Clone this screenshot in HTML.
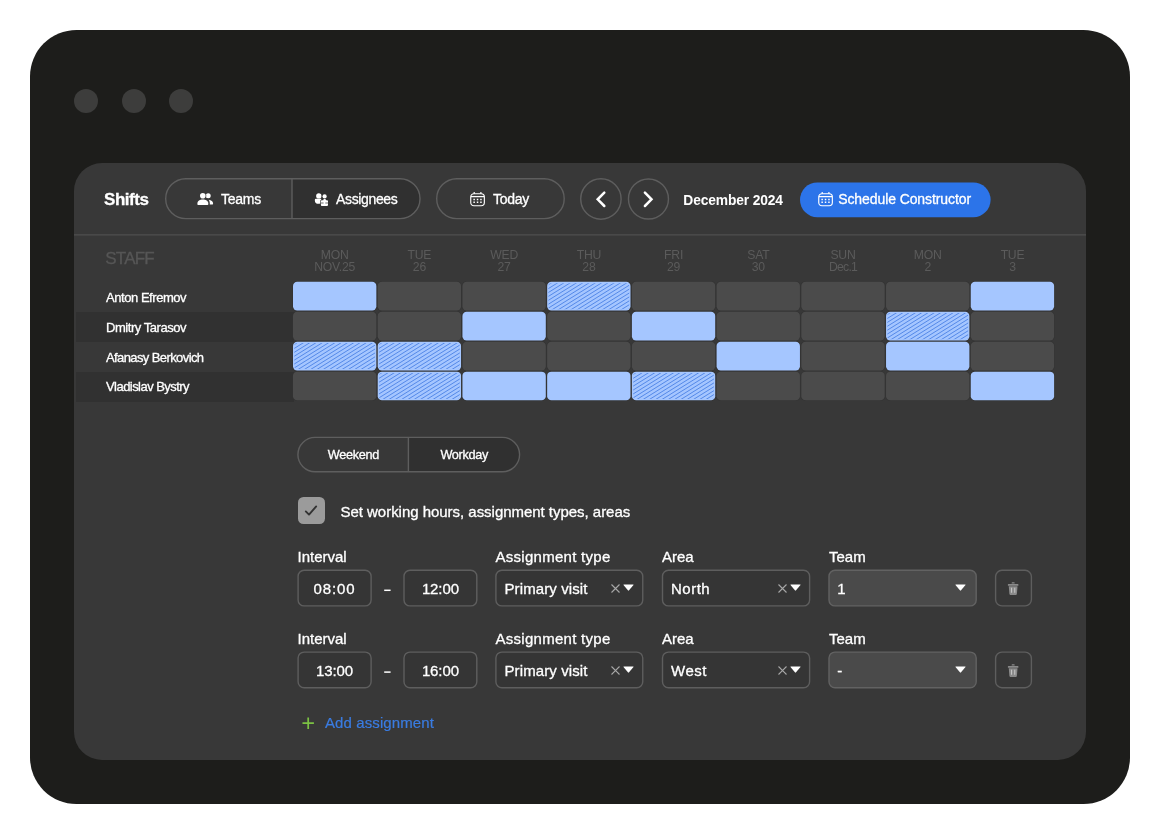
<!DOCTYPE html>
<html lang="en">
<head>
<meta charset="utf-8">
<title>Shifts</title>
<style>
*{box-sizing:border-box;margin:0;padding:0}
html,body{width:1160px;height:834px;background:#fff;overflow:hidden}
body{font-family:"Liberation Sans",Arial,sans-serif;color:#fff;position:relative}
.abs{position:absolute}
.frame{position:absolute;left:30px;top:30px;width:1100px;height:774px;background:#1d1d1b;border-radius:46.5px}
.dot{position:absolute;top:89px;width:24px;height:24px;border-radius:50%;background:#3d3d3c}
.panel{position:absolute;left:74px;top:163px;width:1012px;height:597px;background:#383838;border-radius:28px;overflow:hidden;will-change:transform}
.t{position:absolute;white-space:nowrap;line-height:1;-webkit-text-stroke:0.3px currentColor}
.pill{position:absolute;box-shadow:inset 0 0 0 1.6px #5c5c5c;border-radius:21px}
.hline{position:absolute;left:0;top:71px;width:1012px;height:1.4px;background:#4e4e4e}
.zebra{position:absolute;left:2px;width:218px;height:30px;background:#313131}
.cell{position:absolute;width:83.6px;height:28.6px;border-radius:4.5px;background:#4d4d4d;box-shadow:0 0 0 0.8px #303030}
.cell.b{background:#a4c5ff}
.cell.h{background:#a5c6ff;overflow:hidden}
.dh{position:absolute;top:85.7px;width:84px;text-align:center;font-size:12.2px;line-height:12.3px;color:#5b5b5b;letter-spacing:-0.22px}
.name{font-size:13px;letter-spacing:-0.45px;left:32px}
.lbl{font-size:15px;color:#fff}
.inp{position:absolute;height:36.8px;box-shadow:inset 0 0 0 1.6px #5c5c5c;border-radius:6.5px;background:#353535}
.inp.team{background:#4a4a4a;box-shadow:inset 0 0 0 1.6px #606060}
.val{font-size:15px}
</style>
</head>
<body>
<div class="frame"></div>
<div class="dot" style="left:74px"></div>
<div class="dot" style="left:122px"></div>
<div class="dot" style="left:169px"></div>

<div class="panel" id="panel">
  <svg class="abs" style="left:0;top:0" width="1012" height="597" viewBox="0 0 1012 597"><path d="M218.00 15.70H326.05A19.95 19.95 0 0 1 326.05 55.60H218.00z" fill="#303030"/><path d="M218.00 15.70V55.60" stroke="#5e5e5e" stroke-width="1.4"/><rect x="91.70" y="15.70" width="254.30" height="39.90" rx="19.95" fill="none" stroke="#5e5e5e" stroke-width="1.4"/><rect x="362.70" y="15.70" width="127.50" height="39.90" rx="19.95" fill="none" stroke="#5e5e5e" stroke-width="1.4"/><path d="M334.40 274.40H428.40A17.20 17.20 0 0 1 428.40 308.80H334.40z" fill="#303030"/><path d="M334.40 274.40V308.80" stroke="#5e5e5e" stroke-width="1.4"/><rect x="223.90" y="274.40" width="221.70" height="34.40" rx="17.20" fill="none" stroke="#5e5e5e" stroke-width="1.4"/><circle cx="526.90" cy="36.00" r="20.2" fill="none" stroke="#5e5e5e" stroke-width="1.4"/><circle cx="574.45" cy="36.00" r="20.0" fill="none" stroke="#5e5e5e" stroke-width="1.4"/><rect x="726.0" y="19.5" width="190.6" height="34.7" rx="17.35" fill="#2c74e9"/><path d="M0 71.9H1012" stroke="#4f4f4f" stroke-width="1.3"/><path d="M530.30 29.60L523.70 36.30L530.30 43.00" fill="none" stroke="#fff" stroke-width="2.5" stroke-linecap="round" stroke-linejoin="miter"/><path d="M570.90 29.60L577.50 36.30L570.90 43.00" fill="none" stroke="#fff" stroke-width="2.5" stroke-linecap="round" stroke-linejoin="miter"/><rect x="224.10" y="407.30" width="73.00" height="35.60" rx="6" fill="#353535" stroke="#5e5e5e" stroke-width="1.4"/><rect x="330.00" y="407.30" width="72.80" height="35.60" rx="6" fill="#353535" stroke="#5e5e5e" stroke-width="1.4"/><rect x="421.90" y="407.30" width="146.85" height="35.60" rx="6" fill="#353535" stroke="#5e5e5e" stroke-width="1.4"/><rect x="588.50" y="407.30" width="147.10" height="35.60" rx="6" fill="#353535" stroke="#5e5e5e" stroke-width="1.4"/><rect x="755.00" y="407.30" width="147.20" height="35.60" rx="6" fill="#4a4a4a" stroke="#626262" stroke-width="1.4"/><rect x="921.60" y="407.30" width="35.80" height="35.60" rx="6.3" fill="#373737" stroke="#5e5e5e" stroke-width="1.4"/><path d="M310.20 427.30h6.4" stroke="#fff" stroke-width="1.5"/><rect x="224.10" y="489.10" width="73.00" height="35.60" rx="6" fill="#353535" stroke="#5e5e5e" stroke-width="1.4"/><rect x="330.00" y="489.10" width="72.80" height="35.60" rx="6" fill="#353535" stroke="#5e5e5e" stroke-width="1.4"/><rect x="421.90" y="489.10" width="146.85" height="35.60" rx="6" fill="#353535" stroke="#5e5e5e" stroke-width="1.4"/><rect x="588.50" y="489.10" width="147.10" height="35.60" rx="6" fill="#353535" stroke="#5e5e5e" stroke-width="1.4"/><rect x="755.00" y="489.10" width="147.20" height="35.60" rx="6" fill="#4a4a4a" stroke="#626262" stroke-width="1.4"/><rect x="921.60" y="489.10" width="35.80" height="35.60" rx="6.3" fill="#373737" stroke="#5e5e5e" stroke-width="1.4"/><path d="M310.20 509.10h6.4" stroke="#fff" stroke-width="1.5"/></svg>
  <!-- toolbar -->
  <div class="t" style="left:30px;top:28px;font-size:17px;font-weight:bold;letter-spacing:-0.45px">Shifts</div>

  <svg class="abs" style="left:122px;top:28px" width="18" height="15" viewBox="196 191 18 15"><g fill="#fff"><circle cx="208.200" cy="195.800" r="2.500"/><circle cx="202.800" cy="195.800" r="3.500" fill="#383838"/><circle cx="202.800" cy="195.800" r="2.800"/><path d="M197.400 204.300V203.500C197.400 200.800 200 199.500 202.850 199.500C205.700 199.500 208.300 200.800 208.300 203.500V204.300Q208.300 205 207.600 205H198.100Q197.400 205 197.400 204.300z"/><path d="M208.700 199.700C211.300 199.900 213.100 201.400 213.100 203.400V203.800Q213.100 204.400 212.500 204.400H209.800V203.400C209.800 202 209.500 200.700 208.700 199.700z"/></g></svg>
  <div class="t" style="left:147px;top:29px;font-size:14px;letter-spacing:-0.25px">Teams</div>
  <svg class="abs" style="left:240px;top:29px" width="15" height="15" viewBox="314 192 15 15"><g fill="#fff"><circle cx="318.800" cy="195.900" r="2.650"/><circle cx="324.600" cy="196.400" r="2.100"/><path d="M314.800 199.900Q314.800 198.800 315.900 198.800H321.100Q321.600 198.800 321.200 199.400L320.300 200.600V203.500Q317.600 204.300 315.700 202.900Q314.800 201.800 314.800 199.900z"/><path d="M323.200 200.300l.5-1.200h1.800l.5 1.200h1.100c.5 0 .9.400.9.900v3.900c0 .5-.4.900-.9.900h-5.300c-.5 0-.9-.4-.9-.9v-3.900c0-.5.400-.9.900-.9z"/></g><path d="M320.900 203h2.700M325.300 203h2.700" stroke="#303030" stroke-width="0.700"/></svg>
  <div class="t" style="left:262px;top:29px;font-size:14px;letter-spacing:-0.35px">Assignees</div>

  <svg class="abs cal" style="left:396px;top:29px" width="16" height="16" viewBox="0 0 16 16" fill="none" stroke="#fff"><rect x="0.750" y="1.700" width="13.600" height="12" rx="3.200" stroke-width="1.150"/><path d="M0.900 4.600H14.200" stroke-width="1.300"/><path d="M4.200 0.300V1.500M10.900 0.300V1.500" stroke-width="1.200" stroke-linecap="round"/><path d="M3.400 7.550H4.900M6.800 7.550H8.300M10.200 7.550H11.700M3.400 10.300H4.900M6.800 10.300H8.300M10.200 10.300H11.700" stroke-width="1.500"/></svg>
  <div class="t" style="left:419px;top:29px;font-size:14px;letter-spacing:-0.3px">Today</div>


  <div class="t" style="left:609.3px;top:31px;font-size:13.8px;font-weight:bold;letter-spacing:-0.13px;-webkit-text-stroke-width:0px">December 2024</div>

  <svg class="abs cal" style="left:744px;top:29px" width="16" height="16" viewBox="0 0 16 16" fill="none" stroke="#fff"><rect x="0.750" y="1.700" width="13.600" height="12" rx="3.200" stroke-width="1.150"/><path d="M0.900 4.600H14.200" stroke-width="1.300"/><path d="M4.200 0.300V1.500M10.900 0.300V1.500" stroke-width="1.200" stroke-linecap="round"/><path d="M3.400 7.550H4.900M6.800 7.550H8.300M10.200 7.550H11.700M3.400 10.300H4.900M6.800 10.300H8.300M10.200 10.300H11.700" stroke-width="1.500"/></svg>
  <div class="t" style="left:764.2px;top:29px;font-size:14px;letter-spacing:-0.09px">Schedule Constructor</div>


  <!-- grid -->
  <div class="zebra" style="top:149px"></div>
  <div class="zebra" style="top:209px"></div>
  <div class="t" style="left:31.3px;top:87px;font-size:17px;color:#565656;letter-spacing:-0.8px">STAFF</div>
  <div class="t name" style="top:128px">Anton Efremov</div>
  <div class="t name" style="top:158px">Dmitry Tarasov</div>
  <div class="t name" style="top:188px;letter-spacing:-0.6px">Afanasy Berkovich</div>
  <div class="t name" style="top:217px;letter-spacing:-0.55px">Vladislav Bystry</div>
  <div class="dh" style="left:218.7px">MON<br>NOV.25</div>
  <div class="dh" style="left:303.4px">TUE<br>26</div>
  <div class="dh" style="left:388.1px">WED<br>27</div>
  <div class="dh" style="left:472.9px">THU<br>28</div>
  <div class="dh" style="left:557.6px">FRI<br>29</div>
  <div class="dh" style="left:642.3px">SAT<br>30</div>
  <div class="dh" style="left:727.0px">SUN<br><span style="letter-spacing:-0.75px">Dec.1</span></div>
  <div class="dh" style="left:811.7px">MON<br>2</div>
  <div class="dh" style="left:896.5px">TUE<br>3</div>
  <svg class="abs" style="left:0;top:0" width="1012" height="260" viewBox="0 0 1012 260"><defs><clipPath id="hc"><rect x="1.3" y="1.3" width="80.75" height="26.10" rx="3"/></clipPath><g id="hl"><path clip-path="url(#hc)" d="M-2.0 4.84L85.3 -49.32M-2.0 8.74L85.3 -45.42M-2.0 12.64L85.3 -41.52M-2.0 16.54L85.3 -37.62M-2.0 20.44L85.3 -33.72M-2.0 24.34L85.3 -29.82M-2.0 28.24L85.3 -25.92M-2.0 32.14L85.3 -22.02M-2.0 36.04L85.3 -18.12M-2.0 39.94L85.3 -14.22M-2.0 43.84L85.3 -10.32M-2.0 47.74L85.3 -6.42M-2.0 51.64L85.3 -2.52M-2.0 55.54L85.3 1.38M-2.0 59.44L85.3 5.28M-2.0 63.34L85.3 9.18M-2.0 67.24L85.3 13.08M-2.0 71.14L85.3 16.98M-2.0 75.04L85.3 20.88M-2.0 78.94L85.3 24.78M-2.0 82.84L85.3 28.68" stroke="#4c83e6" stroke-width="0.92" fill="none"/></g></defs><rect x="219.00" y="118.85" width="83.35" height="28.7" rx="4.2" fill="#a5c6ff" stroke="#343434" stroke-width="1.4" paint-order="stroke"/><rect x="303.72" y="118.85" width="83.35" height="28.7" rx="4.2" fill="#4b4b4b" stroke="#343434" stroke-width="1.4" paint-order="stroke"/><rect x="388.44" y="118.85" width="83.35" height="28.7" rx="4.2" fill="#4b4b4b" stroke="#343434" stroke-width="1.4" paint-order="stroke"/><rect x="473.16" y="118.85" width="83.35" height="28.7" rx="4.2" fill="#a5c6ff" stroke="#343434" stroke-width="1.4" paint-order="stroke"/><use href="#hl" x="473.16" y="118.85"/><rect x="557.88" y="118.85" width="83.35" height="28.7" rx="4.2" fill="#4b4b4b" stroke="#343434" stroke-width="1.4" paint-order="stroke"/><rect x="642.60" y="118.85" width="83.35" height="28.7" rx="4.2" fill="#4b4b4b" stroke="#343434" stroke-width="1.4" paint-order="stroke"/><rect x="727.32" y="118.85" width="83.35" height="28.7" rx="4.2" fill="#4b4b4b" stroke="#343434" stroke-width="1.4" paint-order="stroke"/><rect x="812.04" y="118.85" width="83.35" height="28.7" rx="4.2" fill="#4b4b4b" stroke="#343434" stroke-width="1.4" paint-order="stroke"/><rect x="896.76" y="118.85" width="83.35" height="28.7" rx="4.2" fill="#a5c6ff" stroke="#343434" stroke-width="1.4" paint-order="stroke"/><rect x="219.00" y="148.78" width="83.35" height="28.7" rx="4.2" fill="#4b4b4b" stroke="#343434" stroke-width="1.4" paint-order="stroke"/><rect x="303.72" y="148.78" width="83.35" height="28.7" rx="4.2" fill="#4b4b4b" stroke="#343434" stroke-width="1.4" paint-order="stroke"/><rect x="388.44" y="148.78" width="83.35" height="28.7" rx="4.2" fill="#a5c6ff" stroke="#343434" stroke-width="1.4" paint-order="stroke"/><rect x="473.16" y="148.78" width="83.35" height="28.7" rx="4.2" fill="#4b4b4b" stroke="#343434" stroke-width="1.4" paint-order="stroke"/><rect x="557.88" y="148.78" width="83.35" height="28.7" rx="4.2" fill="#a5c6ff" stroke="#343434" stroke-width="1.4" paint-order="stroke"/><rect x="642.60" y="148.78" width="83.35" height="28.7" rx="4.2" fill="#4b4b4b" stroke="#343434" stroke-width="1.4" paint-order="stroke"/><rect x="727.32" y="148.78" width="83.35" height="28.7" rx="4.2" fill="#4b4b4b" stroke="#343434" stroke-width="1.4" paint-order="stroke"/><rect x="812.04" y="148.78" width="83.35" height="28.7" rx="4.2" fill="#a5c6ff" stroke="#343434" stroke-width="1.4" paint-order="stroke"/><use href="#hl" x="812.04" y="148.78"/><rect x="896.76" y="148.78" width="83.35" height="28.7" rx="4.2" fill="#4b4b4b" stroke="#343434" stroke-width="1.4" paint-order="stroke"/><rect x="219.00" y="178.71" width="83.35" height="28.7" rx="4.2" fill="#a5c6ff" stroke="#343434" stroke-width="1.4" paint-order="stroke"/><use href="#hl" x="219.00" y="178.71"/><rect x="303.72" y="178.71" width="83.35" height="28.7" rx="4.2" fill="#a5c6ff" stroke="#343434" stroke-width="1.4" paint-order="stroke"/><use href="#hl" x="303.72" y="178.71"/><rect x="388.44" y="178.71" width="83.35" height="28.7" rx="4.2" fill="#4b4b4b" stroke="#343434" stroke-width="1.4" paint-order="stroke"/><rect x="473.16" y="178.71" width="83.35" height="28.7" rx="4.2" fill="#4b4b4b" stroke="#343434" stroke-width="1.4" paint-order="stroke"/><rect x="557.88" y="178.71" width="83.35" height="28.7" rx="4.2" fill="#4b4b4b" stroke="#343434" stroke-width="1.4" paint-order="stroke"/><rect x="642.60" y="178.71" width="83.35" height="28.7" rx="4.2" fill="#a5c6ff" stroke="#343434" stroke-width="1.4" paint-order="stroke"/><rect x="727.32" y="178.71" width="83.35" height="28.7" rx="4.2" fill="#4b4b4b" stroke="#343434" stroke-width="1.4" paint-order="stroke"/><rect x="812.04" y="178.71" width="83.35" height="28.7" rx="4.2" fill="#a5c6ff" stroke="#343434" stroke-width="1.4" paint-order="stroke"/><rect x="896.76" y="178.71" width="83.35" height="28.7" rx="4.2" fill="#4b4b4b" stroke="#343434" stroke-width="1.4" paint-order="stroke"/><rect x="219.00" y="208.64" width="83.35" height="28.7" rx="4.2" fill="#4b4b4b" stroke="#343434" stroke-width="1.4" paint-order="stroke"/><rect x="303.72" y="208.64" width="83.35" height="28.7" rx="4.2" fill="#a5c6ff" stroke="#343434" stroke-width="1.4" paint-order="stroke"/><use href="#hl" x="303.72" y="208.64"/><rect x="388.44" y="208.64" width="83.35" height="28.7" rx="4.2" fill="#a5c6ff" stroke="#343434" stroke-width="1.4" paint-order="stroke"/><rect x="473.16" y="208.64" width="83.35" height="28.7" rx="4.2" fill="#a5c6ff" stroke="#343434" stroke-width="1.4" paint-order="stroke"/><rect x="557.88" y="208.64" width="83.35" height="28.7" rx="4.2" fill="#a5c6ff" stroke="#343434" stroke-width="1.4" paint-order="stroke"/><use href="#hl" x="557.88" y="208.64"/><rect x="642.60" y="208.64" width="83.35" height="28.7" rx="4.2" fill="#4b4b4b" stroke="#343434" stroke-width="1.4" paint-order="stroke"/><rect x="727.32" y="208.64" width="83.35" height="28.7" rx="4.2" fill="#4b4b4b" stroke="#343434" stroke-width="1.4" paint-order="stroke"/><rect x="812.04" y="208.64" width="83.35" height="28.7" rx="4.2" fill="#4b4b4b" stroke="#343434" stroke-width="1.4" paint-order="stroke"/><rect x="896.76" y="208.64" width="83.35" height="28.7" rx="4.2" fill="#a5c6ff" stroke="#343434" stroke-width="1.4" paint-order="stroke"/></svg>
<div class="t lbl" style="left:223.5px;top:386.0px;">Interval</div>
  <div class="t lbl" style="left:421.5px;top:386.0px;letter-spacing:0.28px">Assignment type</div>
  <div class="t lbl" style="left:588.0px;top:386.0px;">Area</div>
  <div class="t lbl" style="left:755.0px;top:386.0px;">Team</div>
  <div class="t val" style="left:224.1px;top:418.3px;width:73px;text-align:center;letter-spacing:0.9px">08:00</div>
  <div class="t val" style="left:330.0px;top:418.3px;width:72.8px;text-align:center;letter-spacing:-0.1px">12:00</div>
  <div class="t val" style="left:430.5px;top:418.3px;letter-spacing:0.1px">Primary visit</div>
  <svg class="abs" style="left:537.0px;top:421.2px" width="9" height="9" viewBox="0 0 9 9"><path d="M0.500 0.500l8 8M8.500 0.500l-8 8" stroke="#a8a8a8" stroke-width="1.100"/></svg><svg class="abs" style="left:549.0px;top:421.3px" width="11" height="7.2" viewBox="0 0 11 7"><path d="M0.800 0.300h9.400c.4 0 .5.400.3.700L5.800 6.400c-.2.200-.5.200-.7 0L0.500 1c-.2-.3-.1-.7.300-.7z" fill="#fff"/></svg>
  <div class="t val" style="left:597.0px;top:418.3px;letter-spacing:0.5px">North</div>
  <svg class="abs" style="left:703.5px;top:421.2px" width="9" height="9" viewBox="0 0 9 9"><path d="M0.500 0.500l8 8M8.500 0.500l-8 8" stroke="#a8a8a8" stroke-width="1.100"/></svg><svg class="abs" style="left:715.5px;top:421.3px" width="11" height="7.2" viewBox="0 0 11 7"><path d="M0.800 0.300h9.400c.4 0 .5.400.3.700L5.800 6.400c-.2.200-.5.200-.7 0L0.500 1c-.2-.3-.1-.7.300-.7z" fill="#fff"/></svg>
  <div class="t val" style="left:763.2px;top:418.3px;">1</div>
  <svg class="abs" style="left:881.0px;top:421.3px" width="11" height="7.2" viewBox="0 0 11 7"><path d="M0.800 0.300h9.400c.4 0 .5.400.3.700L5.800 6.400c-.2.200-.5.200-.7 0L0.500 1c-.2-.3-.1-.7.300-.7z" fill="#fff"/></svg>
  <svg class="abs" style="left:932.6px;top:418.8px" width="12.3" height="13.4" viewBox="0 0 13 15"><g fill="#8a8a8a"><rect x="4.8" y="0.4" width="3.4" height="1.4" rx="0.5"/><rect x="0.6" y="2.3" width="11.8" height="2" rx="0.6"/><path d="M1.600 4.900h9.800l-.7 8.200c-.1.800-.7 1.400-1.500 1.400H3.800c-.8 0-1.400-.6-1.500-1.400z"/></g><path d="M4.700 6.500v5.500M8.300 6.500v5.500" stroke="#c4c4c4" stroke-width="1.200"/></svg>
  <div class="t lbl" style="left:223.5px;top:467.5px;">Interval</div>
  <div class="t lbl" style="left:421.5px;top:467.5px;letter-spacing:0.28px">Assignment type</div>
  <div class="t lbl" style="left:588.0px;top:467.5px;">Area</div>
  <div class="t lbl" style="left:755.0px;top:467.5px;">Team</div>
  <div class="t val" style="left:224.1px;top:499.6px;width:73px;text-align:center;letter-spacing:-0.1px">13:00</div>
  <div class="t val" style="left:330.0px;top:499.6px;width:72.8px;text-align:center;letter-spacing:-0.1px">16:00</div>
  <div class="t val" style="left:430.5px;top:499.6px;letter-spacing:0.1px">Primary visit</div>
  <svg class="abs" style="left:537.0px;top:503.0px" width="9" height="9" viewBox="0 0 9 9"><path d="M0.500 0.500l8 8M8.500 0.500l-8 8" stroke="#a8a8a8" stroke-width="1.100"/></svg><svg class="abs" style="left:549.0px;top:503.1px" width="11" height="7.2" viewBox="0 0 11 7"><path d="M0.800 0.300h9.400c.4 0 .5.400.3.700L5.800 6.400c-.2.200-.5.200-.7 0L0.500 1c-.2-.3-.1-.7.300-.7z" fill="#fff"/></svg>
  <div class="t val" style="left:597.0px;top:499.6px;letter-spacing:0.5px">West</div>
  <svg class="abs" style="left:703.5px;top:503.0px" width="9" height="9" viewBox="0 0 9 9"><path d="M0.500 0.500l8 8M8.500 0.500l-8 8" stroke="#a8a8a8" stroke-width="1.100"/></svg><svg class="abs" style="left:715.5px;top:503.1px" width="11" height="7.2" viewBox="0 0 11 7"><path d="M0.800 0.300h9.400c.4 0 .5.400.3.700L5.800 6.400c-.2.200-.5.200-.7 0L0.500 1c-.2-.3-.1-.7.300-.7z" fill="#fff"/></svg>
  <div class="t val" style="left:763.2px;top:499.6px;">-</div>
  <svg class="abs" style="left:881.0px;top:503.1px" width="11" height="7.2" viewBox="0 0 11 7"><path d="M0.800 0.300h9.400c.4 0 .5.400.3.700L5.800 6.400c-.2.200-.5.200-.7 0L0.500 1c-.2-.3-.1-.7.300-.7z" fill="#fff"/></svg>
  <svg class="abs" style="left:932.6px;top:500.6px" width="12.3" height="13.4" viewBox="0 0 13 15"><g fill="#8a8a8a"><rect x="4.8" y="0.4" width="3.4" height="1.4" rx="0.5"/><rect x="0.6" y="2.3" width="11.8" height="2" rx="0.6"/><path d="M1.600 4.900h9.800l-.7 8.200c-.1.800-.7 1.400-1.500 1.400H3.800c-.8 0-1.400-.6-1.500-1.400z"/></g><path d="M4.700 6.500v5.500M8.300 6.500v5.500" stroke="#c4c4c4" stroke-width="1.200"/></svg>
  <div class="t" style="left:253.8px;top:285.6px;font-size:12.7px;letter-spacing:-0.3px">Weekend</div>
  <div class="t" style="left:366.4px;top:285.6px;font-size:12.7px;letter-spacing:-0.3px">Workday</div>
  <div class="abs" style="left:223.500px;top:333.500px;width:27.500px;height:27.500px;border-radius:5.500px;background:#9b9b9b"></div>
  <svg class="abs" style="left:230px;top:341px" width="14" height="13" viewBox="0 0 14 13" fill="none" stroke="#333" stroke-width="1.900" stroke-linecap="round" stroke-linejoin="round"><path d="M1.800 7.400l3.200 3.200L12.200 2.400"/></svg>
  <div class="t" style="left:266.500px;top:340.6px;font-size:15px;letter-spacing:-0.03px">Set working hours, assignment types, areas</div>
  <svg class="abs" style="left:228px;top:553.6px" width="12.4" height="12.4" viewBox="0 0 13 13"><path d="M6.500 .5v12M.5 6.500h12" stroke="#7bc143" stroke-width="1.800"/></svg>
  <div class="t" style="left:251px;top:552px;font-size:15px;color:#3a7ce2;letter-spacing:0.1px;-webkit-text-stroke-width:0.2px">Add assignment</div>
</div>
</body>
</html>
